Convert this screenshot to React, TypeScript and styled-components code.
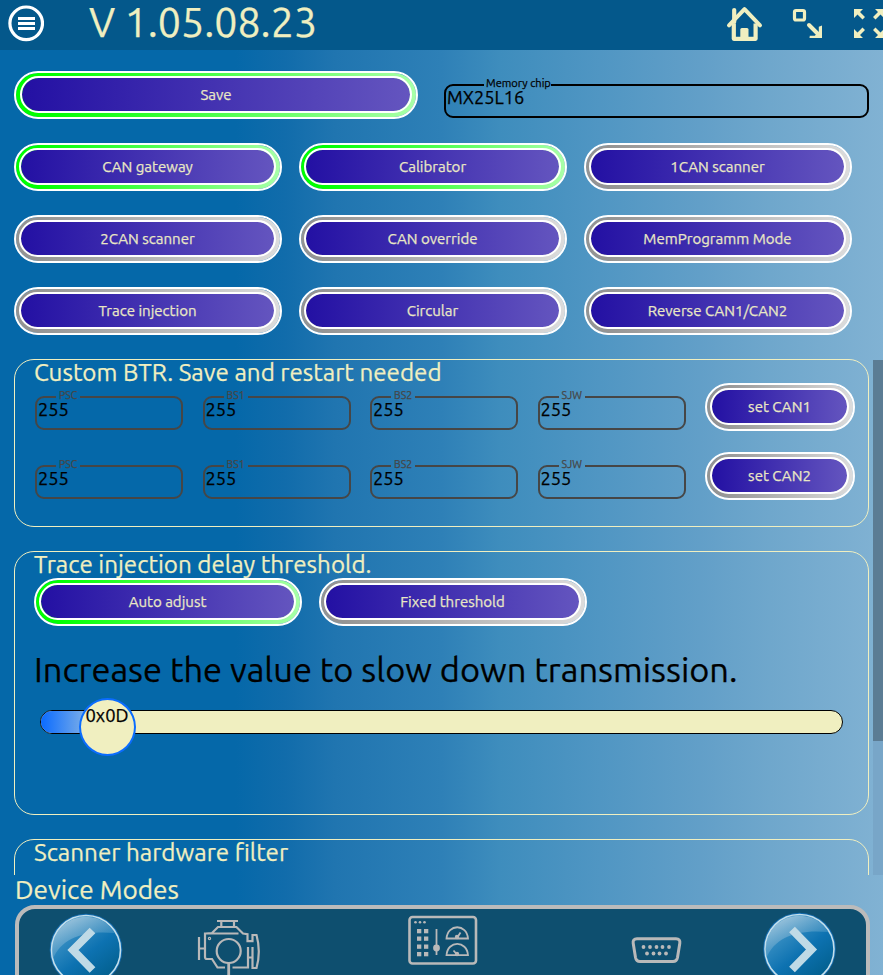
import React from 'react';
import styled, { createGlobalStyle } from 'styled-components';

const cream = '#f0efc0';

const GlobalStyle = createGlobalStyle`
  * { box-sizing: border-box; }
  body {
    margin: 0;
    overflow: hidden;
    font-family: Ubuntu, 'Open Sans', 'Noto Sans', sans-serif;
    color: #000;
    -webkit-text-stroke: 0.25px currentColor;
  }
`;

const Page = styled.div`
  width: 883px;
  height: 975px;
  overflow: hidden;
  display: flex;
  flex-direction: column;
  background: linear-gradient(to right, #0568a9 0, #0568a9 235px, #116cab 285px, #2075b0 335px, #2e80b7 441px, #3e8dbd 500px, #5096c3 600px, #629fc8 700px, #6fa7cc 770px, #81b2d3 883px);
`;

const Header = styled.header`
  flex: none;
  height: 50px;
  background: #04588b;
  display: flex;
  align-items: flex-start;
`;

const MenuButton = styled.button`
  flex: none;
  width: 36px;
  height: 37px;
  margin: 5px 0 0 8px;
  padding: 0;
  border: 0;
  background: none;
`;

const Title = styled.h1`
  margin: 0 auto 0 45px;
  font-size: 41.1px;
  font-weight: 400;
  line-height: 45px;
  color: ${cream};
`;

const HeaderIcons = styled.div`
  flex: none;
  display: flex;
  width: 157px;
  svg { flex: none; }
`;

const TopRow = styled.div`
  flex: none;
  display: grid;
  grid-template-columns: 404px 425px;
  column-gap: 26px;
  padding: 21px 14px 0;
  height: 93px;
`;

const ModeGrid = styled.div`
  flex: none;
  display: grid;
  grid-template-columns: repeat(3, 268px);
  gap: 24px 17px;
  padding: 0 14px;
  height: 216px;
  align-content: start;
`;

const PillFrame = styled.button<{ $on?: boolean }>`
  display: flex;
  width: 100%;
  height: 48px;
  padding: 3px 4px 4px 3px;
  border: 2px solid #fff;
  border-radius: 24px;
  background: ${p => (p.$on
    ? 'linear-gradient(to right, #00ff00 8%, #a8ffa8 100%)'
    : 'linear-gradient(to right, #949494 8%, #dcdcdc 100%)')} padding-box;
  font: inherit;
`;

const PillFace = styled.span<{ $inset: number }>`
  flex: 1;
  display: flex;
  align-items: center;
  justify-content: center;
  margin-left: ${p => p.$inset}px;
  height: 37px;
  border: 2px solid #fff;
  border-radius: 19px;
  background: linear-gradient(to right, #2310a3, #6455bf) padding-box;
  color: #e9e7c4;
  font-size: 15.05px;
  line-height: 17px;
`;

const Field = styled.fieldset<{ $tone: string }>`
  margin: 0;
  padding: 0 0 0 1px;
  min-width: 0;
  height: 34px;
  border: 2px solid ${p => p.$tone};
  border-radius: 9px;
`;

const FieldLabel = styled.legend<{ $tone: string; $big?: boolean }>`
  margin-left: ${p => (p.$big ? 37 : 18)}px;
  padding: ${p => (p.$big ? '0 0 0 2px' : '0 3px')};
  height: 2px;
  color: ${p => p.$tone};
  font-size: ${p => (p.$big ? 11.1 : 10.5)}px;
  line-height: 2px;
  span { display: block; transform: translateY(-2px); }
`;

const FieldValue = styled.div`
  font-size: 18.2px;
  line-height: 22px;
`;

const Scroller = styled.main`
  flex: none;
  height: 516px;
  display: flex;
  overflow: hidden;
`;

const Panels = styled.div`
  width: 855px;
  margin-left: 14px;
  flex: none;
`;

const ScrollTrack = styled.div`
  width: 10px;
  margin: 1px 0 0 4px;
  background: #78a6c8;
`;

const ScrollThumb = styled.div`
  height: 381px;
  background: #5b7c94;
`;

const Panel = styled.section<{ $height: number }>`
  height: ${p => p.$height}px;
  margin-bottom: 24px;
  padding: 0 13px 0 20px;
  border: 1px solid ${cream};
  border-radius: 20px;
`;

const PanelTitle = styled.h2`
  margin: 0 0 1px -1px;
  font-size: 24.2px;
  font-weight: 400;
  line-height: 25px;
  color: ${cream};
`;

const BtrRow = styled.div`
  display: grid;
  grid-template-columns: repeat(4, 148px) 150px;
  column-gap: 19.5px;
  align-items: center;
  height: 48px;
  margin: -3px 0 24px;
  ${PanelTitle} + & { margin-top: -3px; }
  ${Field} { margin-top: 12px; }
`;

const Choices = styled.div`
  display: grid;
  grid-template-columns: repeat(2, 268px);
  column-gap: 17px;
  margin-left: -1px;
`;

const Prompt = styled.p`
  margin: 23px 0 0 -1px;
  font-size: 34.4px;
  line-height: 41px;
  white-space: nowrap;
`;

const SliderTrack = styled.div`
  position: relative;
  width: 803px;
  height: 24px;
  margin: 20px 0 0 5px;
  border: 1px solid #000;
  border-radius: 12px;
  background: ${cream};
`;

const SliderFill = styled.div`
  width: 67px;
  height: 22px;
  border-radius: 11px 0 0 11px;
  background: linear-gradient(to right, #0a6bff, #b5d0dc);
`;

const SliderThumb = styled.div`
  position: absolute;
  left: 38px;
  top: -13px;
  width: 57px;
  height: 58px;
  border: 2px solid #0a6cff;
  border-radius: 50%;
  background: ${cream};
  text-align: center;
  text-indent: -1px;
  font-size: 18.4px;
  line-height: 31px;
`;

const DockTitle = styled.h2`
  flex: none;
  margin: 0;
  padding-left: 15px;
  height: 30px;
  font-size: 26.2px;
  font-weight: 400;
  line-height: 30px;
  color: ${cream};
`;

const Dock = styled.nav`
  flex: none;
  width: 855px;
  height: 110px;
  margin-left: 15px;
  border: 4px solid #bbb;
  border-radius: 20px;
  background: #0e4f6f;
  svg { display: block; }
`;

const MemoryField = styled.div`
  padding-top: 13px;
`;

function Pill({ on, inset = 0, children }: { on?: boolean; inset?: number; children: string }) {
  return (
    <PillFrame $on={on}>
      <PillFace $inset={inset}>{children}</PillFace>
    </PillFrame>
  );
}

function BtrField({ label }: { label: string }) {
  return (
    <Field $tone="#464646">
      <FieldLabel $tone="#464646"><span>{label}</span></FieldLabel>
      <FieldValue>255</FieldValue>
    </Field>
  );
}

function MenuIcon() {
  return (
    <svg width="36" height="37" viewBox="0 0 36 37">
      <circle cx="18.2" cy="18.3" r="16.3" fill="none" stroke="#fff" strokeWidth="3.2" />
      <path d="M10 13.6h17M10 18.5h17M10 23.4h17" stroke="#fff" strokeWidth="3" />
    </svg>
  );
}

/* Home, shrink and full-screen glyphs of the header */
function HeaderGlyphs() {
  return (
    <svg width="157" height="50" viewBox="726 0 157 50" fill="none">
      <path d="M734.2 22V10" stroke={cream} strokeWidth="4.2" strokeLinecap="round" />
      <path d="M729 25.4l15.5-16.3L760 25.4" stroke={cream} strokeWidth="4" strokeLinejoin="round" strokeLinecap="round" />
      <path d="M733.8 23.5v15.3h21.8v-15.3" stroke={cream} strokeWidth="4.2" strokeLinejoin="round" />
      <path d="M740.3 40V29.5q0-1.5 1.5-1.5h5.2q1.5 0 1.5 1.5V40z" fill={cream} />
      <rect x="794.5" y="10.5" width="10" height="9.5" rx="1.5" stroke={cream} strokeWidth="3.2" />
      <path d="M809 25l10 10" stroke={cream} strokeWidth="4" strokeLinecap="round" />
      <path d="M809.5 38H822V25.5l-3.2 1.2v5l-4 4h-5z" fill={cream} />
      <g fill={cream}>
        <path d="M854 9h9l-3 3 5 5-2.5 2.5-5-5-3.5 3.5z" />
        <path d="M884 9h-9l3 3-5 5 2.5 2.5 5-5 3.5 3.5z" />
        <path d="M854 38h9l-3-3 5-5-2.5-2.5-5 5-3.5-3.5z" />
        <path d="M884 38h-9l3-3-5-5 2.5-2.5 5 5 3.5-3.5z" />
      </g>
    </svg>
  );
}

function RoundArrow({ cx, cy, left }: { cx: number; cy: number; left?: boolean }) {
  const d = left ? 'M92.5 930.5L73 950l19.5 20' : 'M792 929.5L811.5 949.5 792 969.5';
  return (
    <g>
      <circle cx={cx} cy={cy} r="36.3" fill="#1675c4" opacity=".75" />
      <circle cx={cx} cy={cy} r="34.5" fill="url(#ball)" stroke="#c3dfec" strokeWidth="1.6" />
      <path
        d={`M${cx - 33} ${cy + 9}C${cx - 25} ${cy - 12} ${cx - 2} ${cy - 20} ${cx + 29} ${cy - 17}A34 34 0 0 0 ${cx - 33} ${cy + 9}z`}
        fill="url(#gloss)"
      />
      <path d={d} stroke="#bfdae6" strokeWidth="8" fill="none" />
    </g>
  );
}

/* Mode pictures along the bottom dock */
function DockIcons() {
  return (
    <svg width="847" height="66" viewBox="19 909 847 66" fill="none">
      <defs>
        <linearGradient id="ball" x1=".15" y1=".1" x2=".8" y2=".95">
          <stop offset="0" stopColor="#4b9ccb" />
          <stop offset=".55" stopColor="#0d72b1" />
          <stop offset="1" stopColor="#025f8d" />
        </linearGradient>
        <linearGradient id="gloss" x1=".1" y1="0" x2=".8" y2="1">
          <stop offset="0" stopColor="#c0d6e4" stopOpacity=".85" />
          <stop offset="1" stopColor="#2b87bd" stopOpacity=".25" />
        </linearGradient>
      </defs>
      <RoundArrow cx={86} cy={950} left />
      <RoundArrow cx={799.5} cy={949} />
      <g stroke="#b9b9b9" strokeWidth="2.2">
        <path d="M217 921h21M221.3 921v6M234 921v6" />
        <path d="M238.5 933.5H205v23.500q0 2 2 2h5l5.500 8.500H225M205.500 933.500l6.500-.500 6-6h18.500l6.500 6.500 4.500.700v7h5V935h4c2.800 10 2.800 23 0 33h-4v-21M248 947v20.500H232.500M253 957.500h-5M205 948.500h-5M199 937v23" />
        <circle cx="228.7" cy="951" r="12" />
        <path d="M228.7 963v12" strokeWidth="2.8" />
        <circle cx="209.5" cy="938.5" r=".6" />
      </g>
      <g stroke="#b9b9b9" strokeWidth="2.6">
        <rect x="409.5" y="917" width="66.5" height="46.5" rx="3" />
        <path d="M436.5 929v26" strokeWidth="1.8" />
        <path d="M446.5 938.500c1-15 20.500-15 21.500 0zM446.500 955.200c1-15 20.500-15 21.500 0z" strokeWidth="1.8" />
        <path d="M457 938l3.5-5.5M457 954.5l-3.5-4" strokeWidth="1.8" />
      </g>
      <g fill="#b9b9b9">
        <circle cx="436.5" cy="948" r="3.4" />
        <circle cx="457" cy="937" r="2.2" />
        <circle cx="457" cy="954" r="2.2" />
        {[415.5, 420, 424.5].map(x => <circle key={x} cx={x} cy="922.3" r="1.3" />)}
        {[929, 936.5, 944.5, 952].map(y => (
          <g key={y}>
            <rect x="417" y={y} width="4.3" height="4.3" />
            <rect x="424" y={y} width="4.3" height="4.3" />
          </g>
        ))}
        {[643.5, 650, 656.5, 662.5, 669].map(x => <circle key={x} cx={x} cy="947" r="1.9" />)}
        {[647, 653.5, 659.5, 666].map(x => <circle key={x} cx={x} cy="953.5" r="1.9" />)}
      </g>
      <path
        d="M637 938.8h39q4.5 0 3.8 4.5l-2.3 14.2q-.8 4-4.5 4h-33q-3.7 0-4.5-4l-2.3-14.2q-.7-4.5 3.8-4.5z"
        stroke="#b9b9b9"
        strokeWidth="3"
      />
    </svg>
  );
}

const modes: [string, boolean][] = [
  ['CAN gateway', true],
  ['Calibrator', true],
  ['1CAN scanner', false],
  ['2CAN scanner', false],
  ['CAN override', false],
  ['MemProgramm Mode', false],
  ['Trace injection', false],
  ['Circular', false],
  ['Reverse CAN1/CAN2', false],
];

export default function App() {
  return (
    <Page>
      <GlobalStyle />
      <Header>
        <MenuButton><MenuIcon /></MenuButton>
        <Title>V 1.05.08.23</Title>
        <HeaderIcons><HeaderGlyphs /></HeaderIcons>
      </Header>
      <TopRow>
        <Pill on inset={1}>Save</Pill>
        <MemoryField>
          <Field $tone="#000">
            <FieldLabel $tone="#000" $big><span>Memory chip</span></FieldLabel>
            <FieldValue>MX25L16</FieldValue>
          </Field>
        </MemoryField>
      </TopRow>
      <ModeGrid>
        {modes.map(([name, on]) => <Pill key={name} on={on}>{name}</Pill>)}
      </ModeGrid>
      <Scroller>
        <Panels>
          <Panel $height={168}>
            <PanelTitle>Custom BTR. Save and restart needed</PanelTitle>
            {['set CAN1', 'set CAN2'].map(action => (
              <BtrRow key={action}>
                {['PSC', 'BS1', 'BS2', 'SJW'].map(label => <BtrField key={label} label={label} />)}
                <Pill>{action}</Pill>
              </BtrRow>
            ))}
          </Panel>
          <Panel $height={264}>
            <PanelTitle>Trace injection delay threshold.</PanelTitle>
            <Choices>
              <Pill on>Auto adjust</Pill>
              <Pill>Fixed threshold</Pill>
            </Choices>
            <Prompt>Increase the value to slow down transmission.</Prompt>
            <SliderTrack>
              <SliderFill />
              <SliderThumb>0x0D</SliderThumb>
            </SliderTrack>
          </Panel>
          <Panel $height={120}>
            <PanelTitle>Scanner hardware filter</PanelTitle>
          </Panel>
        </Panels>
        <ScrollTrack><ScrollThumb /></ScrollTrack>
      </Scroller>
      <DockTitle>Device Modes</DockTitle>
      <Dock><DockIcons /></Dock>
    </Page>
  );
}
